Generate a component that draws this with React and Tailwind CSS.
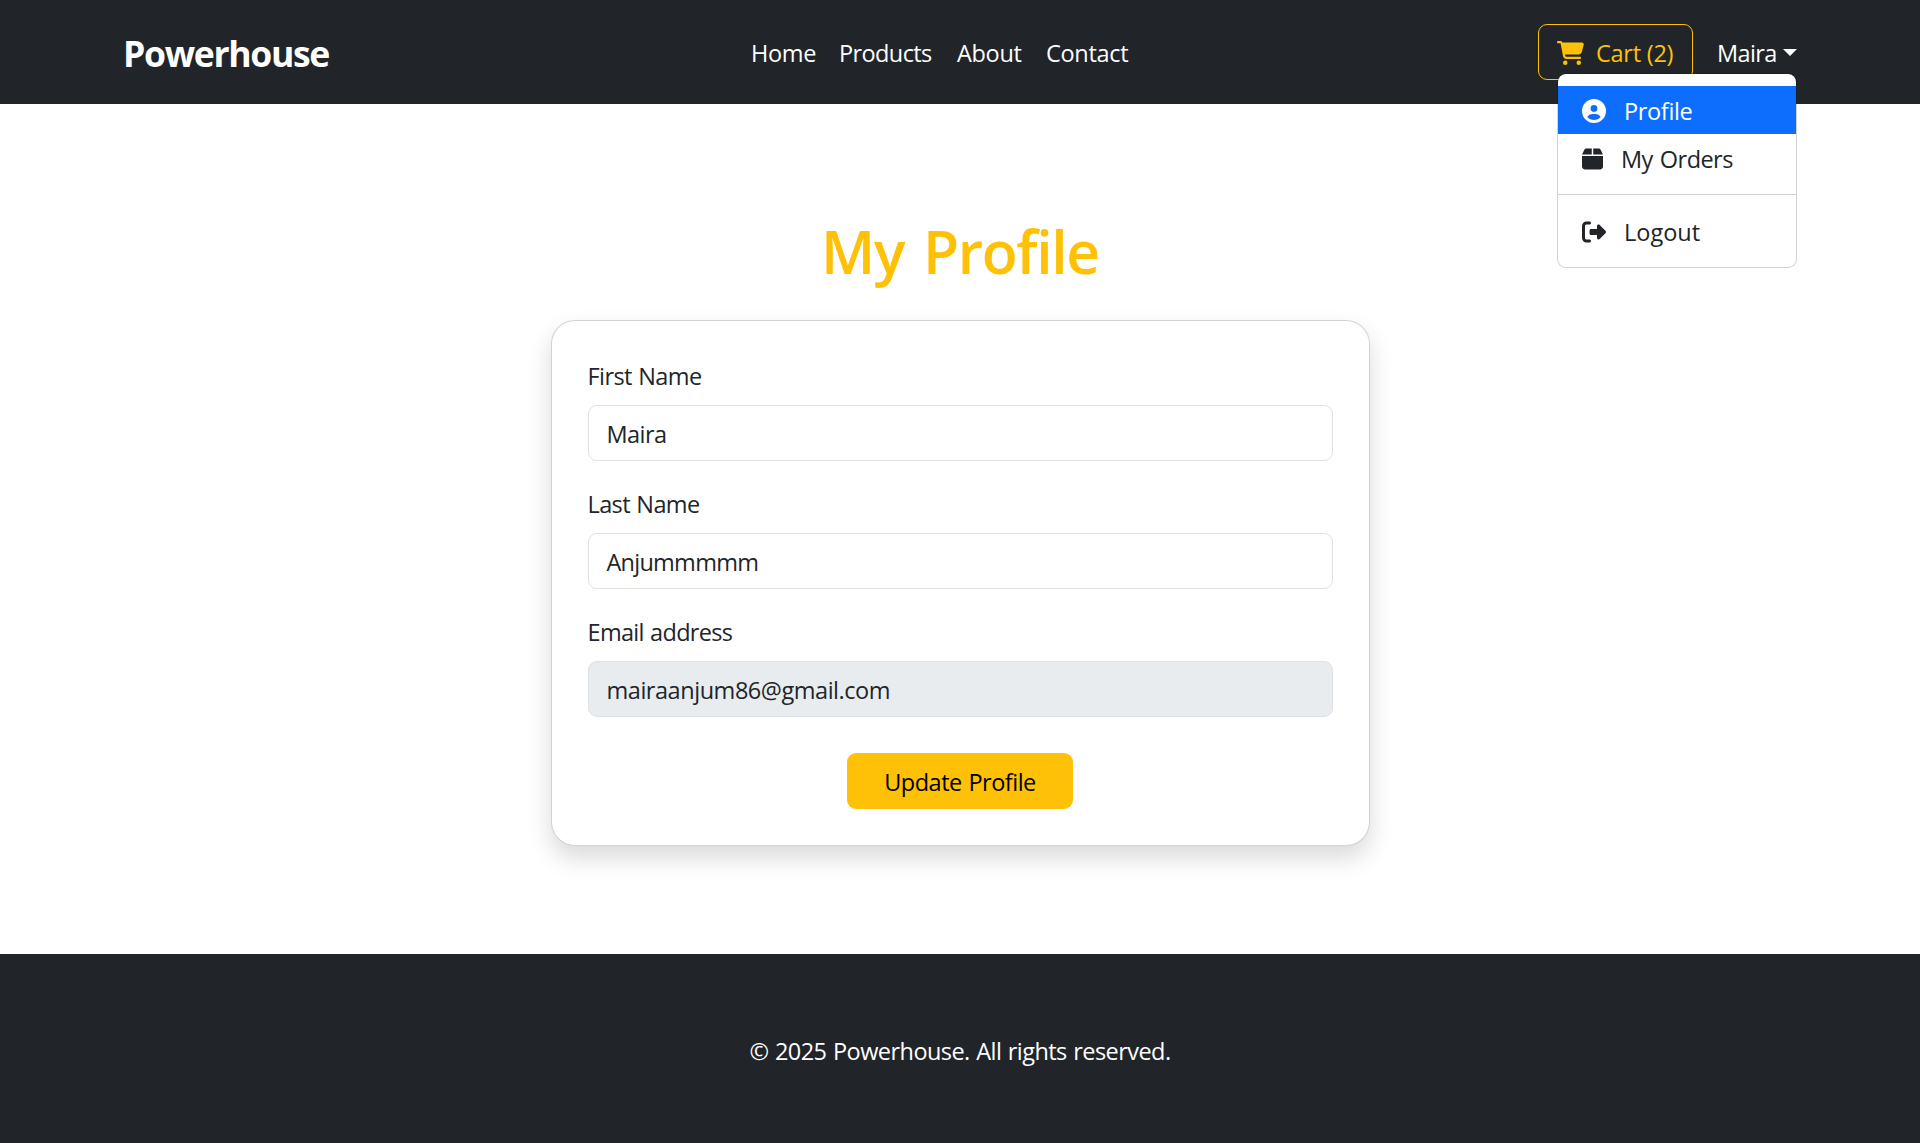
import { FaCartShopping, FaCircleUser, FaBox, FaRightFromBracket } from "react-icons/fa6";

function Text({ className = "", children }) {
  return (
    <span className={`block h-9 text-[23.5px] leading-[38px] whitespace-nowrap ${className}`}>
      {children}
    </span>
  );
}

function Field({ label, labelClass, value, valueClass, disabled }) {
  return (
    <div className="mb-6">
      <Text className={`mb-3 ${labelClass}`}>{label}</Text>
      <div
        className={`h-14 rounded-[9px] border border-[#dee2e6] px-[18px] py-[9px] ${
          disabled ? "bg-[#e9ecef]" : "bg-white"
        }`}
      >
        <Text className={valueClass}>{value}</Text>
      </div>
    </div>
  );
}

function Header() {
  return (
    <header className="flex h-[104px] items-start bg-[#212529] pl-[123px] text-white">
      <div className="mt-[26px] w-[628px] text-[35.6px] leading-[54px] font-bold tracking-[-1.35px]">
        Powerhouse
      </div>
      <nav className="mt-[34px] flex w-[787px]">
        <Text className="w-[88px] tracking-[-0.35px]">Home</Text>
        <Text className="w-[118px] tracking-[-0.6px]">Products</Text>
        <Text className="w-[89px] tracking-[-0.33px]">About</Text>
        <Text className="tracking-[-0.3px]">Contact</Text>
      </nav>
      <div className="mt-6 flex h-14 w-[155px] items-center rounded-[9px] border border-[#ffc107] pl-[18px] text-[#ffc107]">
        <FaCartShopping className="mt-px mr-3 h-6 w-[27px]" />
        <Text className="tracking-[-0.25px]">Cart (2)</Text>
      </div>
      <div className="relative mt-[34px] ml-6 flex w-20 justify-between">
        <Text className="tracking-[-0.6px]">Maira</Text>
        <span className="mt-[15px] h-0 w-0 border-x-[7px] border-t-[7px] border-x-transparent border-t-white" />
        <Menu />
      </div>
    </header>
  );
}

function Menu() {
  return (
    <div className="absolute top-[39px] right-0 z-10 w-60 rounded-[9px] border border-black/[0.175] bg-white bg-clip-padding py-3 text-[#212529]">
      <div className="flex h-12 items-center bg-[#0d6efd] px-6 text-white">
        <FaCircleUser className="mt-0.5 mr-[18px] h-6 w-6" />
        <Text className="tracking-[-0.35px]">Profile</Text>
      </div>
      <div className="flex h-12 items-center px-6">
        <FaBox className="mt-0.5 mr-[18px] h-6 w-[21px]" />
        <Text className="tracking-[-0.55px] [word-spacing:1.5px]">My Orders</Text>
      </div>
      <div className="my-3 h-px bg-black/[0.175]" />
      <div className="flex h-12 items-center px-6">
        <FaRightFromBracket className="mt-0.5 mr-[18px] h-6 w-6" />
        <Text>Logout</Text>
      </div>
    </div>
  );
}

export default function App() {
  return (
    <div className="flex h-[1143px] flex-col bg-white font-['Open_Sans',sans-serif] text-[#212529]">
      <Header />
      <main className="flex flex-1 flex-col items-center pt-[111px]">
        <h1 className="mb-[33px] h-[72px] text-[58.8px] leading-[72px] font-semibold tracking-[-1.35px] whitespace-nowrap text-[#ffc107] [word-spacing:5px]">
          My Profile
        </h1>
        <section className="h-[526px] w-[819px] rounded-3xl border border-black/[0.175] bg-white px-9 pt-9 shadow-[0_12px_24px_rgba(0,0,0,0.15)]">
          <Field
            label="First Name"
            labelClass="tracking-[-0.58px] [word-spacing:0.8px]"
            value="Maira"
            valueClass="tracking-[-0.55px]"
          />
          <Field
            label="Last Name"
            labelClass="tracking-[-0.6px] [word-spacing:0.8px]"
            value="Anjummmmm"
            valueClass="tracking-[-0.75px]"
          />
          <Field
            label="Email address"
            labelClass="tracking-[-0.68px] [word-spacing:0.8px]"
            value="mairaanjum86@gmail.com"
            valueClass="tracking-[-0.46px]"
            disabled
          />
          <button className="mx-auto mt-9 flex h-14 w-[226px] items-center justify-center rounded-[9px] bg-[#ffc107] text-black">
            <Text className="tracking-[-0.49px] [word-spacing:1px]">Update Profile</Text>
          </button>
        </section>
      </main>
      <footer className="flex h-[189px] justify-center bg-[#212529] pt-[78px] text-white">
        <Text className="tracking-[-0.56px] [word-spacing:1px]">© 2025 Powerhouse. All rights reserved.</Text>
      </footer>
    </div>
  );
}
